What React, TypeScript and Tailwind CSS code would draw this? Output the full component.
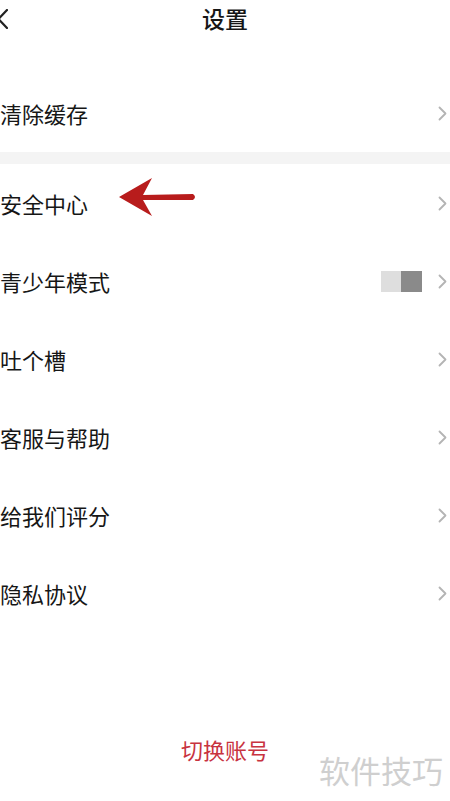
const FONT = { fontFamily: '"Noto Sans CJK SC", "Noto Sans", sans-serif' };

const rows = ["安全中心", "青少年模式", "吐个槽", "客服与帮助", "给我们评分", "隐私协议"];

function Chevron() {
  return (
    <svg width="9" height="15" viewBox="0 0 9 15" fill="none" className="shrink-0">
      <path d="M1.5 1.5 L7.5 7.5 L1.5 13.5" stroke="#b4b4b4" strokeWidth="1.8" strokeLinecap="round" strokeLinejoin="round" />
    </svg>
  );
}

function Row({ label, extra }: { label: string; extra?: React.ReactNode }) {
  return (
    <div className="h-[78px] flex items-center justify-between pr-[3px]">
      <span className="text-[22px] text-[#161616] leading-none">{label}</span>
      <div className="flex items-center gap-[16px]">
        {extra}
        <Chevron />
      </div>
    </div>
  );
}

export default function App() {
  return (
    <div className="w-[450px] h-[801px] bg-white relative overflow-hidden" style={FONT}>
      {/* header */}
      <div className="h-[38px] flex items-center justify-center relative">
        <svg width="11" height="20" viewBox="0 0 11 20" className="absolute left-[-3px] top-[9px]">
          <path d="M10 1 L1.5 10 L10 19" stroke="#222" strokeWidth="2.2" fill="none" strokeLinecap="round" />
        </svg>
        <span className="text-[23px] font-medium text-[#161616] leading-none mt-[-2px]">设置</span>
      </div>
      <div className="h-[36px]" />

      <Row label="清除缓存" />
      <div className="h-[12px] bg-[#f4f4f4]" />

      {rows.map((r) => (
        <Row
          key={r}
          label={r}
          extra={
            r === "青少年模式" ? (
              <div className="flex">
                <div className="w-[20px] h-[21px] bg-[#dedede]" />
                <div className="w-[21px] h-[21px] bg-[#8a8a8a]" />
              </div>
            ) : undefined
          }
        />
      ))}

      {/* red arrow annotation */}
      <svg width="90" height="44" viewBox="0 0 90 44" className="absolute left-[114px] top-[176px]">
        <path d="M5 21 L38 2 L29 19 L79 18 Q83 21 79 24 L29 24 L38 40 Z" fill="#b81c1c" />
      </svg>

      <div className="absolute left-0 right-0 top-[738px] flex justify-center">
        <span className="text-[22px] text-[#c8333f] leading-none">切换账号</span>
      </div>
      <span className="absolute left-[319px] top-[754px] text-[31px] text-[#cfcfcf] leading-none">软件技巧</span>
    </div>
  );
}
